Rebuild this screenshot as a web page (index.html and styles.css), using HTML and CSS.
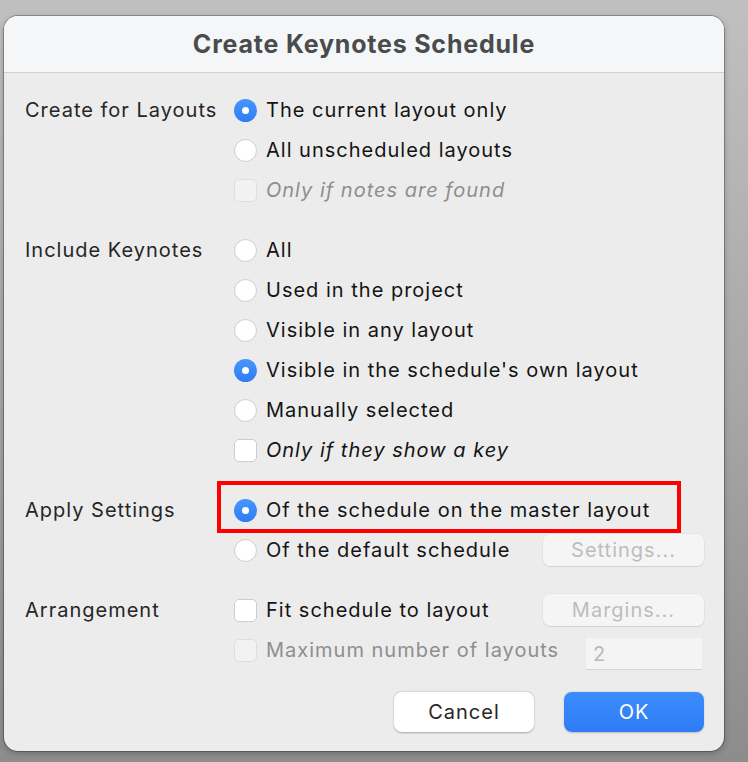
FILE: index.html
```html
<!DOCTYPE html>
<html>
<head>
<meta charset="utf-8">
<link rel="stylesheet" href="styles.css">
</head>
<body>
<div class="dialog">
  <div class="titlebar">Create Keynotes Schedule</div>
  <div class="content">
    <div class="section">
      <div class="label">Create for Layouts</div>
      <div class="options">
        <div class="row"><span class="radio on"></span><span class="text">The current layout only</span></div>
        <div class="row"><span class="radio"></span><span class="text">All unscheduled layouts</span></div>
        <div class="row disabled"><span class="check"></span><span class="text italic">Only if notes are found</span></div>
      </div>
    </div>
    <div class="section">
      <div class="label">Include Keynotes</div>
      <div class="options">
        <div class="row"><span class="radio"></span><span class="text">All</span></div>
        <div class="row"><span class="radio"></span><span class="text">Used in the project</span></div>
        <div class="row"><span class="radio"></span><span class="text">Visible in any layout</span></div>
        <div class="row"><span class="radio on"></span><span class="text">Visible in the schedule's own layout</span></div>
        <div class="row"><span class="radio"></span><span class="text">Manually selected</span></div>
        <div class="row"><span class="check"></span><span class="text italic">Only if they show a key</span></div>
      </div>
    </div>
    <div class="section">
      <div class="label">Apply Settings</div>
      <div class="options">
        <div class="row highlighted"><span class="radio on"></span><span class="text">Of the schedule on the master layout</span></div>
        <div class="row"><span class="radio"></span><span class="text">Of the default schedule</span><span class="btn-small">Settings...</span></div>
      </div>
    </div>
    <div class="section">
      <div class="label">Arrangement</div>
      <div class="options">
        <div class="row"><span class="check"></span><span class="text">Fit schedule to layout</span><span class="btn-small">Margins...</span></div>
        <div class="row disabled"><span class="check"></span><span class="text">Maximum number of layouts</span><span class="field">2</span></div>
      </div>
    </div>
    <div class="actions">
      <span class="btn cancel">Cancel</span>
      <span class="btn ok">OK</span>
    </div>
  </div>
</div>
</body>
</html>
```
FILE: styles.css
```css
html, body {
  margin: 0;
  padding: 0;
}
body {
  width: 748px;
  height: 762px;
  overflow: hidden;
  background: linear-gradient(180deg, #c0c0c0 0%, #a8a8a8 50%, #8c8c8c 100%);
  font-family: "Inter", "Liberation Sans", sans-serif;
  letter-spacing: 1px;
  padding: 16px 0 0 4px;
  box-sizing: border-box;
}
.dialog {
  width: 720px;
  height: 735px;
  background: #ececec;
  border-radius: 14px;
  box-shadow: 0 0 0 1px rgba(0,0,0,0.25), 0 2px 6px rgba(0,0,0,0.25);
  overflow: hidden;
  display: flex;
  flex-direction: column;
}
.titlebar {
  height: 57px;
  flex: none;
  background: #f4f6f7;
  border-bottom: 1px solid #cfcfcf;
  display: flex;
  align-items: center;
  justify-content: center;
  font-weight: 700;
  font-size: 25px;
  color: #4a4b4c;
  letter-spacing: 0.8px;
  box-sizing: border-box;
}
.content {
  padding: 17px 20px 0 21px;
  display: flex;
  flex-direction: column;
  gap: 20px;
}
.section {
  display: flex;
}
.label {
  width: 209px;
  height: 40px;
  line-height: 40px;
  font-size: 20px;
  color: #262626;
}
.options {
  flex: 1;
  display: flex;
  flex-direction: column;
}
.row {
  height: 40px;
  display: flex;
  align-items: center;
  position: relative;
}
.text {
  font-size: 20px;
  color: #141414;
  margin-left: 9px;
}
.italic {
  font-style: italic;
}
.disabled .text {
  color: #8e8e8e;
}
.radio {
  width: 23px;
  height: 23px;
  border-radius: 50%;
  background: #ffffff;
  box-sizing: border-box;
  border: 1px solid #cdcdcd;
  flex: none;
  position: relative;
}
.radio.on {
  border: none;
  background: linear-gradient(180deg, #4a96fb, #2f7cf6);
}
.radio.on::after {
  content: "";
  position: absolute;
  left: 8px;
  top: 8px;
  width: 7px;
  height: 7px;
  border-radius: 50%;
  background: #ffffff;
}
.check {
  width: 23px;
  height: 23px;
  border-radius: 5px;
  background: #ffffff;
  box-sizing: border-box;
  border: 1px solid #cdcdcd;
  flex: none;
}
.disabled .check {
  background: #f2f2f2;
  border-color: #dedede;
}
.highlighted::after {
  content: "";
  position: absolute;
  left: -17px;
  top: -9px;
  width: 464px;
  height: 52px;
  border: 4px solid #ff0000;
  box-sizing: border-box;
}
.btn-small {
  margin-left: auto;
  width: 161px;
  height: 32px;
  box-sizing: border-box;
  border-radius: 7px;
  background: #f5f5f5;
  box-shadow: 0 1px 1px rgba(0,0,0,0.08), 0 0 0 0.5px rgba(0,0,0,0.06);
  color: #bdbdbd;
  font-size: 20px;
  display: flex;
  align-items: center;
  justify-content: center;
}
.field {
  margin-left: auto;
  margin-right: 2px;
  margin-top: 8px;
  width: 116px;
  height: 32px;
  box-sizing: border-box;
  background: #f4f4f4;
  border-bottom: 1px solid #d6d6d6;
  color: #b8b8b8;
  font-size: 20px;
  padding-left: 7px;
  display: flex;
  align-items: center;
}
.actions {
  display: flex;
  justify-content: flex-end;
  gap: 30px;
  margin-top: 2px;
}
.btn {
  width: 140px;
  height: 40px;
  border-radius: 8px;
  display: flex;
  align-items: center;
  justify-content: center;
  font-size: 20px;
}
.cancel {
  background: #ffffff;
  color: #262626;
  box-shadow: 0 0.5px 2px rgba(0,0,0,0.3);
}
.ok {
  background: linear-gradient(180deg, #3a8dfb, #2f7bf6);
  color: #ffffff;
  box-shadow: 0 0.5px 2px rgba(0,0,0,0.2);
}
```
